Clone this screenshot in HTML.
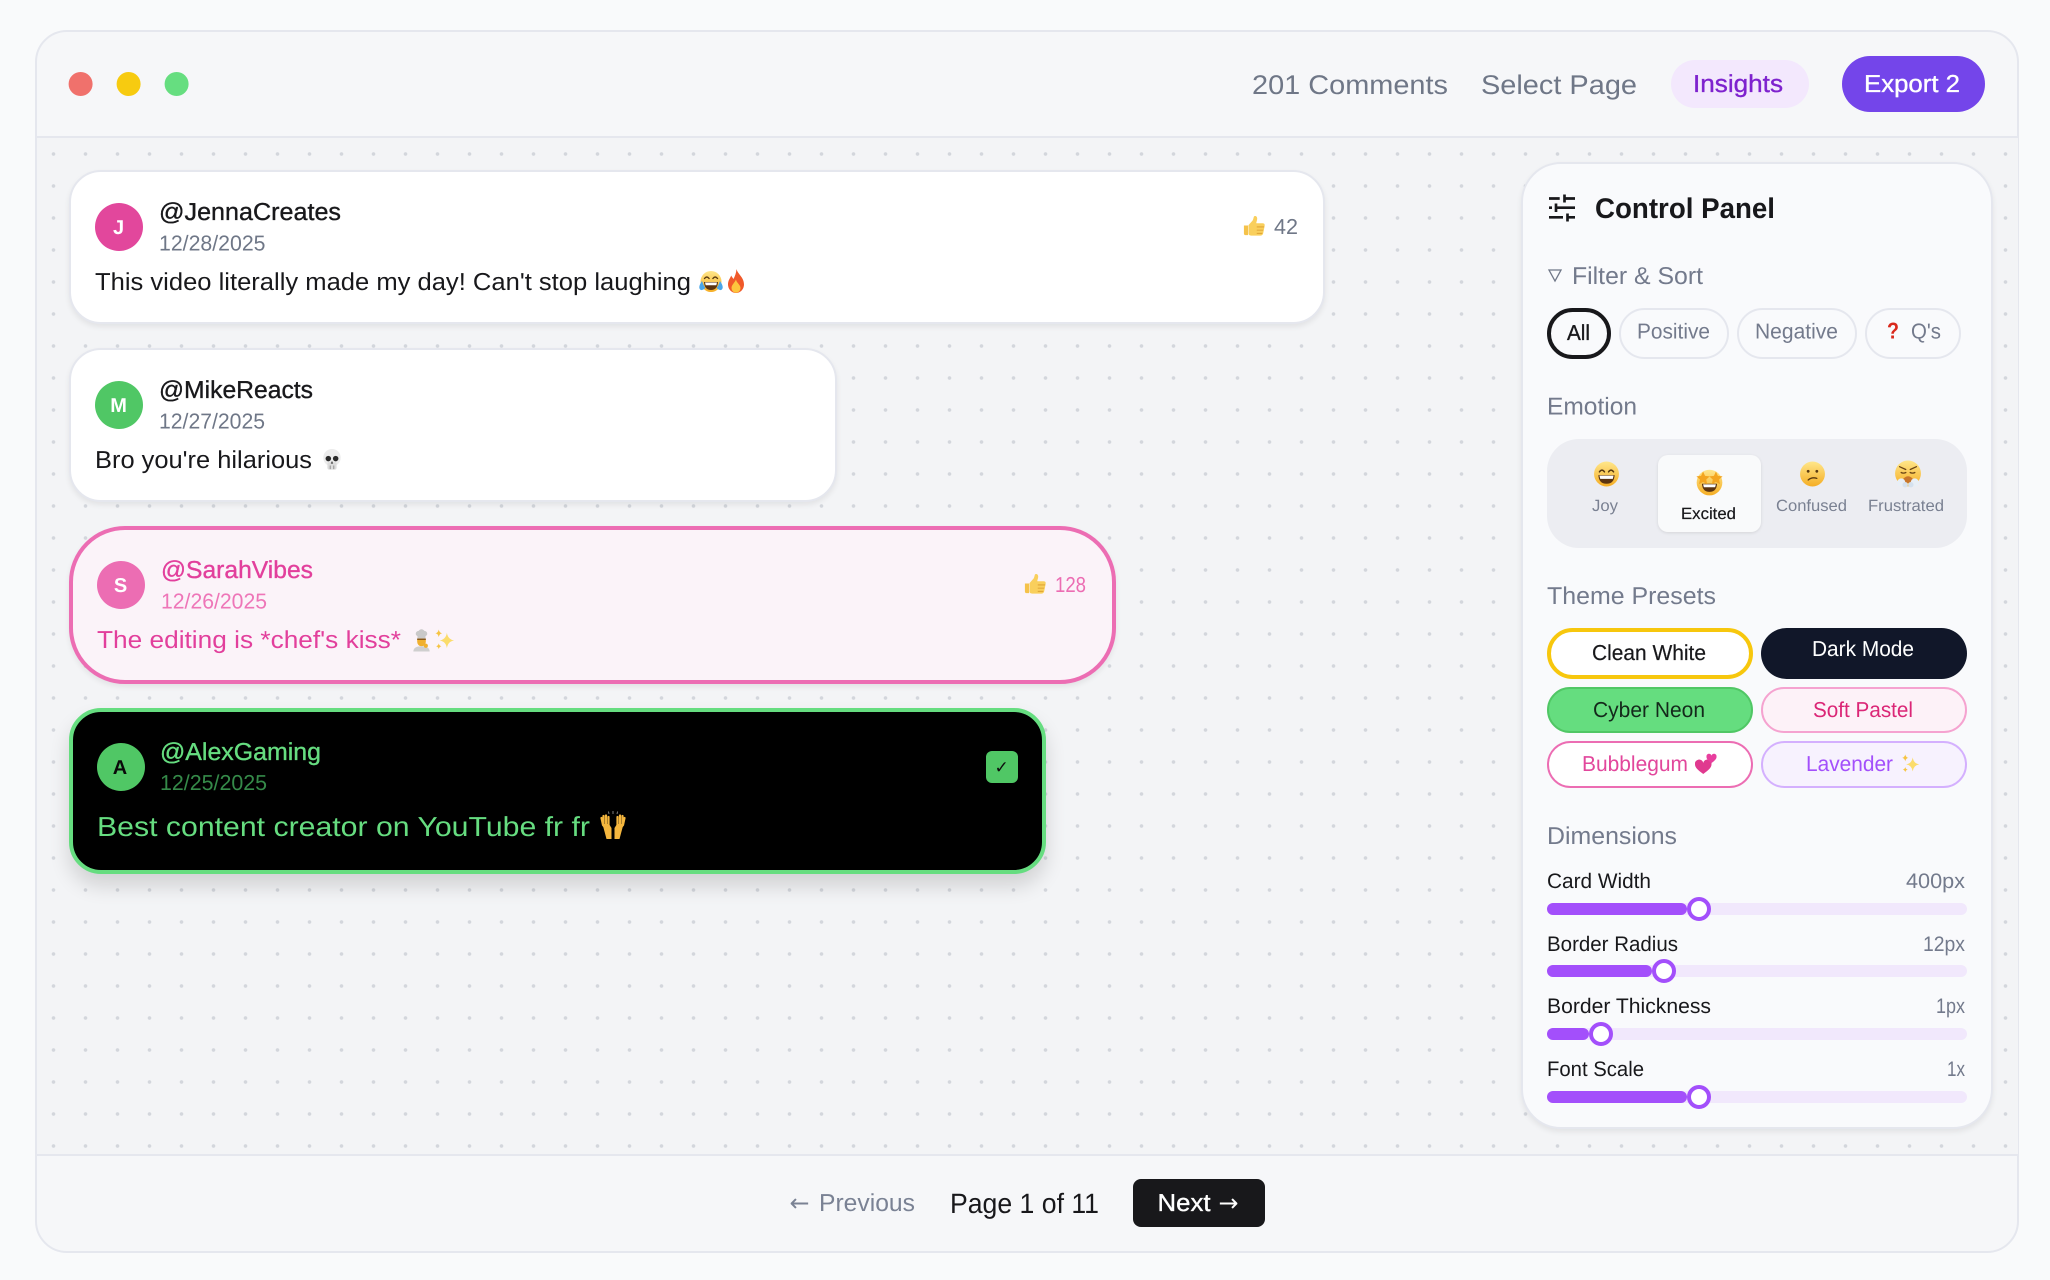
<!DOCTYPE html>
<html lang="en"><head><meta charset="utf-8"><title>Comments</title>
<style>
html,body{margin:0;padding:0;width:2050px;height:1280px;overflow:hidden;background:#f9fafb}
.b{position:absolute;box-sizing:border-box}
svg.o{position:absolute;left:-.6px;top:0;width:2050px;height:1280px}
text{font-family:"Liberation Sans",sans-serif;fill:currentColor;text-rendering:geometricPrecision}
.m{stroke:currentColor;stroke-width:.35}
.ar{font-family:"DejaVu Sans",sans-serif}
.p{border-radius:999px}
.tr{background:#f1e8fc;height:12px;left:1547px;width:420px;border-radius:6px}
.fi{background:#a34ffb;height:12px;left:1547px;border-radius:6px}
.th{width:24px;height:24px;border-radius:50%;border:4px solid #a34ffb;background:#fff}
</style></head><body>
<div class="b" style="left:35px;top:30px;width:1984px;height:1223px;background:#f6f7f9;border:2.67px solid #e5e7ee;border-radius:32px"></div>
<div class="b" style="left:36.500px;top:136px;width:1981px;height:1020px;background-color:#f3f4f6;border-top:2px solid #e5e7ee;border-bottom:2px solid #e5e7ee;background-image:radial-gradient(circle at center,#d3d6dc 1.5px,rgba(211,214,220,0) 2.1px);background-size:32px 32px;background-position:.5px 0"></div>

<div class="b" style="left:69px;top:170px;width:1256px;height:154px;background:#fff;border:2.67px solid #e5e7ee;border-radius:32px;box-shadow:0 3px 6px rgba(0,0,0,.07)"></div>
<div class="b" style="left:69px;top:348px;width:768px;height:154px;background:#fff;border:2.67px solid #e5e7ee;border-radius:32px;box-shadow:0 3px 6px rgba(0,0,0,.07)"></div>
<div class="b" style="left:69px;top:526px;width:1047px;height:158px;background:#fbf3f9;border:4px solid #ec6db3;border-radius:56px;box-shadow:0 3px 6px rgba(0,0,0,.07)"></div>
<div class="b" style="left:69px;top:708px;width:977px;height:166px;background:#000;border:4px solid #66dd80;border-radius:32px;box-shadow:0 12px 20px rgba(0,0,0,.14)"></div>

<div class="b" style="left:95px;top:203px;width:48px;height:48px;border-radius:50%;background:#e2479c"></div>
<div class="b" style="left:95px;top:381px;width:48px;height:48px;border-radius:50%;background:#50c765"></div>
<div class="b" style="left:97px;top:561px;width:48px;height:48px;border-radius:50%;background:#ec6db3"></div>
<div class="b" style="left:97px;top:743px;width:48px;height:48px;border-radius:50%;background:#50c765"></div>
<div class="b" style="left:986px;top:751px;width:32px;height:32px;border-radius:6px;background:#50c765"></div>

<div class="b p" style="left:1671px;top:60px;width:138px;height:48px;background:#f3e8fd"></div>
<div class="b p" style="left:1841.500px;top:56px;width:143.500px;height:56px;background:#7445ea"></div>

<div class="b" style="left:1521px;top:162px;width:472px;height:967px;background:#f9fafc;border:2.67px solid #e5e7ee;border-radius:40px;box-shadow:0 3px 6px rgba(0,0,0,.07)"></div>
<div class="b p" style="left:1547px;top:308px;width:64px;height:51px;border:4px solid #18181b"></div>
<div class="b p" style="left:1619px;top:308px;width:110px;height:51px;border:2.67px solid #e5e7ee"></div>
<div class="b p" style="left:1737px;top:308px;width:120px;height:51px;border:2.67px solid #e5e7ee"></div>
<div class="b p" style="left:1865px;top:308px;width:96px;height:51px;border:2.67px solid #e5e7ee"></div>
<div class="b" style="left:1547px;top:439px;width:420px;height:109px;background:#ecedf2;border-radius:32px"></div>
<div class="b" style="left:1658px;top:455px;width:103px;height:77px;background:#f9fafb;border-radius:10px;box-shadow:0 1px 3px rgba(0,0,0,.1)"></div>

<div class="b p" style="left:1547px;top:628px;width:206px;height:51px;background:#fff;border:4px solid #f7c70d"></div>
<div class="b p" style="left:1761px;top:628px;width:206px;height:51px;background:#111729"></div>
<div class="b p" style="left:1547px;top:687px;width:206px;height:46px;background:#65dd7f;border:2.67px solid #50c765"></div>
<div class="b p" style="left:1761px;top:687px;width:206px;height:46px;background:#fdf2f8;border:2.67px solid #f5a3d0"></div>
<div class="b p" style="left:1547px;top:741px;width:206px;height:47px;background:#fff;border:2.67px solid #ec6db3"></div>
<div class="b p" style="left:1761px;top:741px;width:206px;height:47px;background:#f7f2fe;border:2.67px solid #d4b0fe"></div>

<div class="b tr" style="top:903px"></div><div class="b fi" style="top:903px;width:140px"></div><div class="b th" style="left:1687px;top:897px"></div>
<div class="b tr" style="top:965px"></div><div class="b fi" style="top:965px;width:105px"></div><div class="b th" style="left:1652px;top:959px"></div>
<div class="b tr" style="top:1028px"></div><div class="b fi" style="top:1028px;width:42px"></div><div class="b th" style="left:1589px;top:1022px"></div>
<div class="b tr" style="top:1091px"></div><div class="b fi" style="top:1091px;width:140px"></div><div class="b th" style="left:1687px;top:1085px"></div>

<div class="b" style="left:1133px;top:1179px;width:132px;height:48px;background:#18181b;border-radius:8px"></div>

<svg class="o" viewBox="0 0 2050 1280" xmlns="http://www.w3.org/2000/svg">
<defs>
<linearGradient id="f" x1="0" y1="0" x2="0" y2="1"><stop offset="0" stop-color="#ffe68a"/><stop offset="1" stop-color="#f5ae25"/></linearGradient>
<symbol id="joy" viewBox="0 0 24 24"><circle cx="12" cy="12" r="11.500" fill="url(#f)"/><path d="M5.500 10q2.300-3.200 4.600 0M13.900 10q2.300-3.200 4.600 0" fill="none" stroke="#5a3a10" stroke-width="1.400" stroke-linecap="round"/><path d="M4.500 13h15q-.5 8-7.500 8t-7.500-8z" fill="#5b3410"/><path d="M5.500 13.500h13l-.7 3h-11.600z" fill="#fff"/></symbol>
<symbol id="star" viewBox="0 0 24 24"><circle cx="12" cy="12.500" r="11" fill="url(#f)"/><path d="M5.500 13.500h13q-.5 7-6.500 7t-6.500-7z" fill="#5b3410"/><path d="M6.500 14h11l-.7 2.500h-9.600z" fill="#fff"/><path d="M6.500 3l1.700 3.700 4 .5-3 2.700.8 4-3.500-2-3.500 2 .8-4-3-2.700 4-.5zM17.500 3l1.700 3.700 4 .5-3 2.700.8 4-3.500-2-3.500 2 .8-4-3-2.700 4-.5z" fill="#f4a51f"/></symbol>
<symbol id="conf" viewBox="0 0 24 24"><circle cx="12" cy="12" r="11.500" fill="url(#f)"/><circle cx="8" cy="9.500" r="1.300" fill="#5a3a10"/><circle cx="16" cy="9.500" r="1.300" fill="#5a3a10"/><path d="M8 17.500q3.500-3 8-1.500" fill="none" stroke="#5a3a10" stroke-width="1.200" stroke-linecap="round"/></symbol>
<symbol id="frus" viewBox="0 0 24 24"><circle cx="12" cy="11.500" r="11.500" fill="url(#f)"/><path d="M4.500 5.500l5.500 2.500M19.500 5.500L14 8" stroke="#6a4414" stroke-width="1.100" stroke-linecap="round"/><path d="M5.500 10.500q2.500 1.500 5 0M13.500 10.500q2.500 1.500 5 0" fill="none" stroke="#6a4414" stroke-width="1.100"/><path d="M8 16q4-4 8 0v4H8z" fill="#c9762a"/><circle cx="6" cy="19.500" r="3.600" fill="#e8eff6"/><circle cx="18" cy="19.500" r="3.600" fill="#e8eff6"/><circle cx="9.500" cy="21.500" r="2.400" fill="#d5e1ee"/><circle cx="14.500" cy="21.500" r="2.400" fill="#d5e1ee"/></symbol>
<symbol id="lol" viewBox="0 0 24 24"><circle cx="12" cy="11.500" r="10.500" fill="url(#f)"/><path d="M5.500 8.500q2.300-3 4.600 0M13.900 8.500q2.300-3 4.600 0" fill="none" stroke="#5a3a10" stroke-width="1.400" stroke-linecap="round"/><path d="M5 12h14q-.5 8-7 8t-7-8z" fill="#5b3410"/><path d="M6 12.500h12l-.7 2.800H6.700z" fill="#fff"/><path d="M3 11q-3.500 5-2.500 7.500t4 1 .5-3.500zM21 11q3.500 5 2.500 7.500t-4 1-.5-3.500z" fill="#4aa6e8"/></symbol>
<symbol id="fire" viewBox="0 0 24 24"><path d="M12.500 0c1 5 7.500 8 7.500 15.500a8 8.500 0 0 1-16 0c0-4 2-6 3.200-9 1 2 1.800 2.500 2.300 3.500 1.500-3 2.700-6 3-10z" fill="#f0592a"/><path d="M12 10.500c.5 3.500 4.500 5 4.500 8.500a4.500 4.800 0 0 1-9 0c0-3 3-5 4.500-8.500z" fill="#fdc53d"/></symbol>
<symbol id="skull" viewBox="0 0 24 24"><circle cx="12" cy="10" r="9.500" fill="#ececec"/><rect x="7" y="15" width="10" height="8" rx="2" fill="#dcdcdc"/><circle cx="8" cy="11" r="3" fill="#2a2a2a"/><circle cx="16" cy="11" r="3" fill="#2a2a2a"/><path d="M12 13.500l-1.300 3h2.600z" fill="#444"/><path d="M10 18.500v4M14 18.500v4" stroke="#777" stroke-width=".8"/></symbol>
<symbol id="thumb" viewBox="0 0 24 24"><path d="M1 11.500h4.500V22H3q-2 0-2-2z" fill="#f5c24a"/><path d="M6 11l4.500-5c1-2 1-3.500 1.500-4.500 1-1 3.500-.5 3.500 2.500 0 2-1 3.500-1 5h7c2 0 2.500 1.500 2 3.500l-1.500 7.500c-.4 1.500-1.500 2.500-3 2.500H9c-2 0-3-1-3-2z" fill="#f9cf5c"/><path d="M15 13h8M15 16.500h7M15 20h6" stroke="#d99a2b" stroke-width=".9"/></symbol>
<symbol id="chef" viewBox="0 0 24 24"><path d="M6 5.500a3 3 0 0 1 3-3 3.500 3.500 0 0 1 6 0 3 3 0 0 1 3 3c0 1.500-1 2-1.800 2.500v2.500H7.800V8C7 7.500 6 7 6 5.500z" fill="#c9c9c9"/><path d="M7.500 10.500h9v3.500a4.500 4.500 0 0 1-9 0z" fill="#f0b02f"/><path d="M7.500 10.500h9v1.500h-9z" fill="#8a5a1c"/><path d="M3.500 24c0-4 3.500-5.500 8.500-5.500s8.500 1.500 8.500 5.500z" fill="#cfcfcf"/><circle cx="16.500" cy="18" r="2.200" fill="#f0b02f"/></symbol>
<symbol id="spark" viewBox="0 0 24 24"><path d="M14.500 5q1 7 7.500 8q-6.500 1-7.500 8q-1-7-7.500-8q6.500-1 7.500-8z" fill="#fbdc6b"/><path d="M6 1.500q.6 3.400 3.500 4q-2.900.6-3.500 4q-.6-3.400-3.500-4q2.900-.6 3.500-4zM6 16q.5 2.500 2.800 3q-2.300.5-2.800 3q-.5-2.500-2.800-3q2.300-.5 2.800-3z" fill="#f6c443"/></symbol>
<symbol id="hands" viewBox="0 0 30 28"><path d="M11 28V21L5 14 3.500 7M5.500 13 5.500 5M8 13V4.500M10.500 14V6" fill="none" stroke="#f4b63e" stroke-width="2.200" stroke-linecap="round"/><path d="M4.500 13h6.500l2.500 4v11h-5z" fill="#f4b63e"/><path d="M19 28V21l6-7 1.500-7M24.500 13V5M22 13V4.500M19.500 14V6" fill="none" stroke="#f4b63e" stroke-width="2.200" stroke-linecap="round"/><path d="M25.500 13H19l-2.500 4v11h5z" fill="#f4b63e"/><path d="M15 0v3M10.500 .5 11 3M19.500 .5 19 3" stroke="#999" stroke-width=".8"/></symbol>
<symbol id="heart" viewBox="0 0 24 24"><path d="M9 24C3 19.500 0 17 0 13.500a4.500 4.500 0 0 1 9-1.500 4.500 4.500 0 0 1 9 1.500C18 17 15 19.500 9 24z" fill="#e0398f"/><path d="M18 12C14 9 12.500 7.500 12.500 5a2.800 2.800 0 0 1 5.500-1 2.800 2.800 0 0 1 5.500 1C23.500 7.500 22 9 18 12z" fill="#e83e9e"/></symbol>
</defs>

<g><circle cx="81.600" cy="84" r="12" fill="#f0716c"/><circle cx="129.600" cy="84" r="12" fill="#f7cb10"/><circle cx="177.600" cy="84" r="12" fill="#66de80"/></g>

<g style="color:#6f7787" font-size="27"><text x="1253" y="94" textLength="196" lengthAdjust="spacingAndGlyphs">201 Comments</text><text x="1482" y="94" textLength="156" lengthAdjust="spacingAndGlyphs">Select Page</text></g>
<text class="m" x="1694" y="92" font-size="24.500" textLength="90" lengthAdjust="spacingAndGlyphs" style="color:#7e22ce">Insights</text>
<text class="m" x="1865" y="92" font-size="24.500" textLength="96" lengthAdjust="spacingAndGlyphs" style="color:#fff">Export 2</text>

<!-- card 1 -->
<text x="119.600" y="234" font-size="20" font-weight="700" text-anchor="middle" style="color:#fff">J</text>
<text class="m" x="160" y="220" font-size="24.500" textLength="182" lengthAdjust="spacingAndGlyphs" style="color:#18181b">@JennaCreates</text>
<text x="160" y="250.500" font-size="21.600" textLength="106.500" lengthAdjust="spacingAndGlyphs" style="color:#6f7787">12/28/2025</text>
<text x="96" y="290" font-size="24.500" textLength="596" lengthAdjust="spacingAndGlyphs" style="color:#18181b">This video literally made my day! Can't stop laughing</text>
<use href="#lol" x="700" y="270" width="24" height="24"/><use href="#fire" x="725" y="269" width="24" height="24"/>
<use href="#thumb" x="1244" y="215" width="22" height="22"/>
<text x="1275" y="234" font-size="21.600" textLength="24" lengthAdjust="spacingAndGlyphs" style="color:#6f7787">42</text>

<!-- card 2 -->
<text x="119.600" y="412" font-size="20" font-weight="700" text-anchor="middle" style="color:#fff">M</text>
<text class="m" x="160" y="398" font-size="24.500" textLength="154" lengthAdjust="spacingAndGlyphs" style="color:#18181b">@MikeReacts</text>
<text x="160" y="428.500" font-size="21.600" textLength="106" lengthAdjust="spacingAndGlyphs" style="color:#6f7787">12/27/2025</text>
<text x="96" y="468" font-size="24.500" textLength="217" lengthAdjust="spacingAndGlyphs" style="color:#18181b">Bro you're hilarious</text>
<use href="#skull" x="322" y="448" width="22" height="23"/>

<!-- card 3 -->
<text x="121.600" y="592" font-size="20" font-weight="700" text-anchor="middle" style="color:#fff">S</text>
<text class="m" x="162" y="578" font-size="24.500" textLength="152" lengthAdjust="spacingAndGlyphs" style="color:#e23f9c">@SarahVibes</text>
<text x="162" y="608.500" font-size="21.600" textLength="106" lengthAdjust="spacingAndGlyphs" style="color:#ee76b8">12/26/2025</text>
<text x="98" y="648" font-size="24.500" textLength="304" lengthAdjust="spacingAndGlyphs" style="color:#e23f9c">The editing is *chef's kiss*</text>
<use href="#chef" x="411" y="628" width="23" height="24"/><use href="#spark" x="434" y="628" width="23" height="23"/>
<use href="#thumb" x="1025" y="573" width="22" height="22"/>
<text x="1056" y="592" font-size="21.600" textLength="31" lengthAdjust="spacingAndGlyphs" style="color:#ec6db3">128</text>

<!-- card 4 -->
<text x="121" y="774" font-size="20" font-weight="700" text-anchor="middle" style="color:#0a0a0a">A</text>
<text class="m" x="161" y="760" font-size="24.500" textLength="161" lengthAdjust="spacingAndGlyphs" style="color:#66dd80">@AlexGaming</text>
<text x="161" y="790" font-size="21.600" textLength="107" lengthAdjust="spacingAndGlyphs" style="color:#358a49">12/25/2025</text>
<text x="98" y="836" font-size="27.500" textLength="493" lengthAdjust="spacingAndGlyphs" style="color:#66dd80">Best content creator on YouTube fr fr</text>
<use href="#hands" x="599" y="811" width="30" height="28"/>
<text class="ar" x="1002.600" y="773" font-size="17" text-anchor="middle" style="color:#0d0d0d">✓</text>

<!-- panel -->
<g stroke="#18181b" stroke-width="2.670" fill="none">
<path d="M1550 198.500h10.700M1565 198.500h11M1565.500 194.500v8"/>
<path d="M1550 207.700h3M1558 207.700h18M1557 203.500v8.500"/>
<path d="M1550 217.300h14M1568 217.300h8M1568.500 213.500v8"/>
</g>
<text x="1596" y="218" font-size="28.500" font-weight="700" textLength="180" lengthAdjust="spacingAndGlyphs" style="color:#18181b">Control Panel</text>
<path d="M1550 270h12l-6 11z" fill="none" stroke="#6f7787" stroke-width="1.300"/>
<text x="1573" y="284" font-size="24.300" textLength="131" lengthAdjust="spacingAndGlyphs" style="color:#737a8c">Filter &amp; Sort</text>
<text class="m" x="1568" y="340" font-size="21.600" textLength="23" lengthAdjust="spacingAndGlyphs" style="color:#18181b">All</text>
<text x="1638" y="338.500" font-size="21.600" textLength="73" lengthAdjust="spacingAndGlyphs" style="color:#737a8c">Positive</text>
<text x="1756" y="338.500" font-size="21.600" textLength="83" lengthAdjust="spacingAndGlyphs" style="color:#737a8c">Negative</text>
<text x="1888" y="338.500" font-size="23" font-weight="700" textLength="12" lengthAdjust="spacingAndGlyphs" style="color:#d9291c">?</text>
<text x="1912" y="338.500" font-size="21.600" textLength="30" lengthAdjust="spacingAndGlyphs" style="color:#737a8c">Q's</text>

<text x="1548" y="414.500" font-size="24.300" textLength="90" lengthAdjust="spacingAndGlyphs" style="color:#737a8c">Emotion</text>
<use href="#joy" x="1594.500" y="461" width="26" height="26"/>
<use href="#star" x="1696.500" y="468" width="28" height="28"/>
<use href="#conf" x="1800.500" y="461" width="26" height="26"/>
<use href="#frus" x="1895.500" y="460" width="27" height="28"/>
<g font-size="16.300" style="color:#7a8192">
<text x="1593" y="511" textLength="26" lengthAdjust="spacingAndGlyphs">Joy</text>
<text x="1777" y="511" textLength="71" lengthAdjust="spacingAndGlyphs">Confused</text>
<text x="1869" y="511" textLength="76" lengthAdjust="spacingAndGlyphs">Frustrated</text>
</g>
<text class="m" x="1682" y="519" font-size="16.300" textLength="55" lengthAdjust="spacingAndGlyphs" style="color:#18181b;stroke-width:.2">Excited</text>

<text x="1548" y="604" font-size="24.300" textLength="169" lengthAdjust="spacingAndGlyphs" style="color:#737a8c">Theme Presets</text>
<text class="m" x="1593" y="660" font-size="21.600" textLength="114" lengthAdjust="spacingAndGlyphs" style="color:#18181b;stroke-width:.2">Clean White</text>
<text x="1813" y="656" font-size="21.600" textLength="102" lengthAdjust="spacingAndGlyphs" style="color:#fff">Dark Mode</text>
<text x="1594" y="717" font-size="21.600" textLength="112" lengthAdjust="spacingAndGlyphs" style="color:#14291b">Cyber Neon</text>
<text x="1814" y="717" font-size="21.600" textLength="100" lengthAdjust="spacingAndGlyphs" style="color:#db2777">Soft Pastel</text>
<text x="1583" y="771" font-size="21.600" textLength="106" lengthAdjust="spacingAndGlyphs" style="color:#e2479c">Bubblegum</text>
<use href="#heart" x="1696" y="752" width="22" height="22"/>
<text x="1807" y="771" font-size="21.600" textLength="87" lengthAdjust="spacingAndGlyphs" style="color:#a34ffb">Lavender</text>
<use href="#spark" x="1901" y="753" width="21" height="21"/>

<text x="1548" y="844" font-size="24.300" textLength="130" lengthAdjust="spacingAndGlyphs" style="color:#737a8c">Dimensions</text>
<g font-size="21" style="color:#18181b">
<text x="1548" y="888" textLength="104" lengthAdjust="spacingAndGlyphs">Card Width</text>
<text x="1548" y="951" textLength="131" lengthAdjust="spacingAndGlyphs">Border Radius</text>
<text x="1548" y="1013" textLength="164" lengthAdjust="spacingAndGlyphs">Border Thickness</text>
<text x="1548" y="1076" textLength="97" lengthAdjust="spacingAndGlyphs">Font Scale</text>
</g>
<g font-size="21" style="color:#737a8c">
<text x="1907" y="888" textLength="59" lengthAdjust="spacingAndGlyphs">400px</text>
<text x="1924" y="951" textLength="42" lengthAdjust="spacingAndGlyphs">12px</text>
<text x="1937" y="1013" textLength="29" lengthAdjust="spacingAndGlyphs">1px</text>
<text x="1948" y="1076" textLength="18" lengthAdjust="spacingAndGlyphs">1x</text>
</g>

<!-- footer -->
<text class="ar" x="790.500" y="1211" font-size="24" textLength="20" lengthAdjust="spacingAndGlyphs" style="color:#7a8294">←</text>
<text x="820" y="1211" font-size="24.500" textLength="96" lengthAdjust="spacingAndGlyphs" style="color:#7a8294">Previous</text>
<text x="951" y="1213" font-size="28" textLength="149" lengthAdjust="spacingAndGlyphs" style="color:#18181b">Page 1 of 11</text>
<text class="m" x="1158.500" y="1211" font-size="24.500" textLength="53" lengthAdjust="spacingAndGlyphs" style="color:#fff">Next</text>
<text class="ar" x="1219.500" y="1211" font-size="24" textLength="20" lengthAdjust="spacingAndGlyphs" style="color:#fff">→</text>
</svg>
</body></html>
